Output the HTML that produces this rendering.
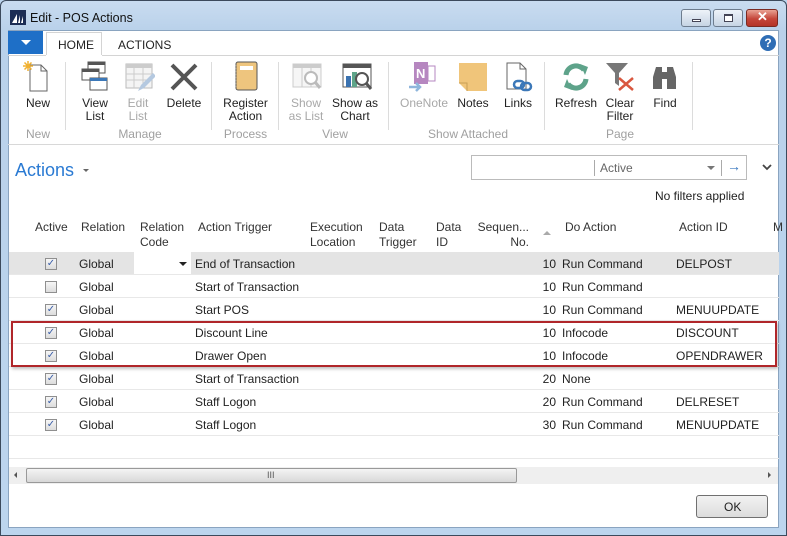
<!DOCTYPE html>
<html><head><meta charset="utf-8">
<style>
*{margin:0;padding:0;box-sizing:border-box}
body{width:787px;height:536px;overflow:hidden;position:relative;font-family:"Liberation Sans",sans-serif;font-size:12px;color:#222;background:#bcd5ee}
.a{position:absolute;white-space:nowrap}
.frame{position:absolute;left:0;top:0;width:787px;height:536px;border:1px solid #3c4a5c;border-radius:6px 6px 0 0;background:linear-gradient(#c9dcf0,#b9d1ea 30px,#bcd5ee)}
.content{position:absolute;left:8px;top:30px;width:771px;height:498px;background:#fff;border:1px solid #8aa4c0}
.lbl{position:absolute;text-align:center;font-size:12px;line-height:13px;color:#222}
.dis{color:#a8a8a8}
.grp{position:absolute;top:127px;font-size:12px;color:#a0a0a0;text-align:center}
.sep{position:absolute;top:62px;width:1px;height:68px;background:#dcdcdc}
.hd{position:absolute;top:220px;font-size:12px;line-height:15px;color:#333}
.row{position:absolute;left:9px;width:770px;height:23px;border-bottom:1px solid #e8e8e8}
.cb{position:absolute;left:45px;top:6px;width:12px;height:12px;border:1px solid #8f8f8f;background:linear-gradient(#f4f4f4,#ddd);font-size:10px;line-height:10px;text-align:center;color:#3b5fa8}
.t{position:absolute;top:4px;font-size:12px;color:#222}
.btn{position:absolute;width:24px;height:18px;top:9px;border:1px solid #6d7c8e;border-radius:3px;background:linear-gradient(#eef3f9,#c6d4e4)}
</style></head><body>
<div class="frame"></div>
<!-- title -->
<svg class="a" style="left:10px;top:10px" width="16" height="15"><rect width="16" height="15" fill="#1b2d55"/><path d="M2 13 L7 4 L7 13 Z M8 13 L10 5 L10 13 Z M11 13 L13 6 L13 13Z" fill="#fff"/></svg>
<div class="a" style="left:30px;top:11px;font-size:12.5px;color:#111">Edit - POS Actions</div>
<div class="btn" style="left:681px;width:30px"><div style="position:absolute;left:10px;top:9px;width:9px;height:3px;background:#fff;border:1px solid #445"></div></div>
<div class="btn" style="left:713px;width:30px"><div style="position:absolute;left:10px;top:4px;width:9px;height:8px;border:1px solid #445;border-top-width:2px;background:#fff"></div></div>
<div class="btn" style="left:746px;width:32px;border-color:#7a2a22;background:linear-gradient(#e9a293,#c5463a 55%,#b43428)"><div style="position:absolute;left:10px;top:-1px;color:#fff;font-weight:bold;font-size:13px">✕</div></div>
<div class="content"></div>
<!-- tabs -->
<div class="a" style="left:8px;top:31px;width:35px;height:23px;background:#1e6fc7"></div>
<div class="a" style="left:21px;top:40px;width:0;height:0;border-left:5px solid transparent;border-right:5px solid transparent;border-top:5px solid #fff"></div>
<div class="a" style="left:46px;top:32px;width:56px;height:24px;background:#fff;border:1px solid #d4d4d4;border-bottom:none"></div>
<div class="a" style="left:8px;top:55px;width:771px;height:1px;background:#d4d4d4"></div>
<div class="a" style="left:46px;top:55px;width:56px;height:2px;background:#fff"></div>
<div class="a" style="left:58px;top:38px;font-size:12px;color:#222">HOME</div>
<div class="a" style="left:118px;top:38px;font-size:12px;color:#222">ACTIONS</div>
<div class="a" style="left:760px;top:35px;width:16px;height:16px;border-radius:50%;background:#2e6db5;color:#fff;font-weight:bold;font-size:12px;text-align:center;line-height:16px">?</div>
<!-- ribbon icons -->
<svg class="a" style="left:22px;top:61px" width="30" height="32"><path d="M8 4 H19 L25 10 V30 H8 Z" fill="#fff" stroke="#666"/><path d="M19 4 V10 H25" fill="none" stroke="#666"/><g stroke="#f0b030" stroke-width="1.5"><path d="M6 0 V10 M1 5 H11 M2.5 1.5 L9.5 8.5 M9.5 1.5 L2.5 8.5"/></g></svg>
<div class="lbl" style="left:18px;top:97px;width:40px">New</div>
<div class="grp" style="left:18px;width:40px">New</div>
<div class="sep" style="left:65px"></div>
<svg class="a" style="left:80px;top:61px" width="30" height="32"><rect x="8" y="1" width="17" height="11" fill="#fff" stroke="#555"/><rect x="8" y="1" width="17" height="3" fill="#555"/><rect x="2" y="8" width="17" height="11" fill="#fff" stroke="#555"/><rect x="2" y="8" width="17" height="3" fill="#555"/><rect x="10" y="17" width="17" height="12" fill="#fff" stroke="#555"/><rect x="10" y="17" width="17" height="3" fill="#3c78b8"/></svg>
<div class="lbl" style="left:75px;top:97px;width:40px">View<br>List</div>
<svg class="a" style="left:125px;top:61px" width="30" height="32"><rect x="1" y="3" width="26" height="24" fill="#f4f4f4" stroke="#bbb"/><rect x="1" y="3" width="26" height="4" fill="#ccc"/><path d="M1 13 H27 M1 19 H27 M9 7 V27 M18 7 V27" stroke="#ccc"/><path d="M13 30 L16 24 L28 12 L31 15 L19 27 Z" fill="#b5c9e0"/></svg>
<div class="lbl dis" style="left:118px;top:97px;width:40px">Edit<br>List</div>
<svg class="a" style="left:169px;top:63px" width="30" height="28"><path d="M3 2 L27 26 M27 2 L3 26" stroke="#555" stroke-width="4"/></svg>
<div class="lbl" style="left:164px;top:97px;width:40px">Delete</div>
<div class="grp" style="left:95px;width:90px">Manage</div>
<div class="sep" style="left:211px"></div>
<svg class="a" style="left:232px;top:61px" width="28" height="32"><rect x="4" y="1" width="21" height="28" rx="2" fill="#eec57e" stroke="#555"/><rect x="8" y="5" width="13" height="4" fill="#fff"/><path d="M4 4 V27" stroke="#777" stroke-dasharray="1 2"/></svg>
<div class="lbl" style="left:218px;top:97px;width:55px">Register<br>Action</div>
<div class="grp" style="left:218px;width:55px">Process</div>
<div class="sep" style="left:278px"></div>
<svg class="a" style="left:292px;top:63px" width="32" height="30"><rect x="1" y="1" width="28" height="23" fill="#f6f6f6" stroke="#ccc"/><rect x="1" y="1" width="28" height="4" fill="#ccc"/><path d="M10 5 V24 M19 5 V24" stroke="#ccc"/><circle cx="19" cy="15" r="6" fill="#fff" stroke="#bbb" stroke-width="2"/><path d="M23 19 L28 25" stroke="#bbb" stroke-width="3"/></svg>
<div class="lbl dis" style="left:284px;top:97px;width:44px">Show<br>as List</div>
<svg class="a" style="left:342px;top:63px" width="32" height="30"><rect x="1" y="1" width="28" height="23" fill="#fff" stroke="#555"/><rect x="1" y="1" width="28" height="4" fill="#555"/><rect x="4" y="13" width="5" height="11" fill="#3a72b0"/><rect x="10" y="9" width="5" height="15" fill="#5fa58a"/><circle cx="20" cy="16" r="6" fill="#fff" stroke="#555" stroke-width="2"/><path d="M24 20 L29 26" stroke="#555" stroke-width="3"/></svg>
<div class="lbl" style="left:330px;top:97px;width:50px">Show as<br>Chart</div>
<div class="grp" style="left:310px;width:50px">View</div>
<div class="sep" style="left:388px"></div>
<svg class="a" style="left:408px;top:61px" width="30" height="32"><rect x="6" y="1" width="14" height="22" fill="#b687c0"/><text x="8" y="17" font-family="Liberation Sans" font-weight="bold" font-size="13" fill="#fff">N</text><rect x="20" y="5" width="7" height="15" fill="#fff" stroke="#b687c0"/><path d="M1 26 H12 M8 22 L12 26 L8 30" stroke="#8fb6dc" stroke-width="2.5" fill="none"/></svg>
<div class="lbl dis" style="left:396px;top:97px;width:56px">OneNote</div>
<svg class="a" style="left:458px;top:62px" width="30" height="30"><path d="M1 1 H29 V29 H9 L1 21 Z" fill="#f0c57a"/><path d="M1 21 H9 V29" fill="none" stroke="#c9a055"/></svg>
<div class="lbl" style="left:453px;top:97px;width:40px">Notes</div>
<svg class="a" style="left:505px;top:62px" width="28" height="32"><path d="M2 1 H15 L21 7 V27 H2 Z" fill="#fff" stroke="#666"/><path d="M15 1 V7 H21" fill="none" stroke="#666"/><rect x="9" y="19" width="10" height="7" rx="3.5" fill="none" stroke="#3c78b8" stroke-width="2.5"/><rect x="16" y="21" width="10" height="7" rx="3.5" fill="none" stroke="#3c78b8" stroke-width="2.5"/></svg>
<div class="lbl" style="left:498px;top:97px;width:40px">Links</div>
<div class="grp" style="left:408px;width:120px">Show Attached</div>
<div class="sep" style="left:544px"></div>
<svg class="a" style="left:561px;top:62px" width="30" height="30"><path d="M5 13 A10 10 0 0 1 23 8" fill="none" stroke="#5ea38a" stroke-width="5"/><path d="M19 2 L27 5 L24 13 Z" fill="#5ea38a"/><path d="M25 17 A10 10 0 0 1 7 22" fill="none" stroke="#5ea38a" stroke-width="5"/><path d="M11 28 L3 25 L6 17 Z" fill="#5ea38a"/></svg>
<div class="lbl" style="left:553px;top:97px;width:46px">Refresh</div>
<svg class="a" style="left:605px;top:62px" width="32" height="32"><path d="M1 1 H23 L14 11 V24 L10 21 V11 Z" fill="#777"/><path d="M14 16 L28 28 M28 16 L14 28" stroke="#d9573f" stroke-width="2.5"/></svg>
<div class="lbl" style="left:600px;top:97px;width:40px">Clear<br>Filter</div>
<svg class="a" style="left:651px;top:63px" width="28" height="28"><path d="M2 26 V14 L5 4 H11 V26 Z M16 26 V4 H22 L25 14 V26 Z" fill="#666"/><rect x="10" y="9" width="7" height="7" fill="#666"/></svg>
<div class="lbl" style="left:645px;top:97px;width:40px">Find</div>
<div class="grp" style="left:600px;width:40px">Page</div>
<div class="sep" style="left:692px"></div>
<div class="a" style="left:8px;top:144px;width:771px;height:1px;background:#d8d8d8"></div>
<!-- page title -->
<div class="a" style="left:15px;top:160px;font-size:18px;color:#2a7ad3">Actions</div>
<div class="a" style="left:83px;top:169px;border-left:3px solid transparent;border-right:3px solid transparent;border-top:3px solid #666"></div>
<div class="a" style="left:471px;top:155px;width:276px;height:25px;border:1px solid #bbb;background:#fff"></div>
<div class="a" style="left:594px;top:160px;width:1px;height:16px;background:#aaa"></div>
<div class="a" style="left:600px;top:161px;color:#666;font-size:12px">Active</div>
<div class="a" style="left:707px;top:166px;border-left:4px solid transparent;border-right:4px solid transparent;border-top:4px solid #777"></div>
<div class="a" style="left:721px;top:160px;width:1px;height:16px;background:#aaa"></div>
<div class="a" style="left:727px;top:158px;color:#3a78c0;font-size:14px;font-weight:bold">→</div>
<svg class="a" style="left:762px;top:164px" width="10" height="7"><path d="M1 1 L5 5 L9 1" stroke="#444" stroke-width="1.8" fill="none"/></svg>
<div class="a" style="left:655px;top:189px;font-size:12px;color:#222">No filters applied</div>
<!-- headers -->
<div class="hd" style="left:35px">Active</div>
<div class="hd" style="left:81px">Relation</div>
<div class="hd" style="left:140px">Relation<br>Code</div>
<div class="hd" style="left:198px">Action Trigger</div>
<div class="hd" style="left:310px">Execution<br>Location</div>
<div class="hd" style="left:379px">Data<br>Trigger</div>
<div class="hd" style="left:436px">Data<br>ID</div>
<div class="hd" style="left:476px;width:53px;text-align:right">Sequen...<br>No.</div>
<div class="a" style="left:543px;top:231px;border-left:4px solid transparent;border-right:4px solid transparent;border-bottom:4px solid #aaa"></div>
<div class="hd" style="left:565px">Do Action</div>
<div class="hd" style="left:679px">Action ID</div>
<div class="hd" style="left:773px">M</div>
<!-- rows -->
<div class="row" style="top:252px;background:#e4e4e4"><div style="position:absolute;left:125px;top:0;width:57px;height:22px;background:#fff"></div><div style="position:absolute;left:170px;top:10px;border-left:4px solid transparent;border-right:4px solid transparent;border-top:4px solid #222"></div></div>
<div class="row" style="top:275px"></div>
<div class="row" style="top:298px"></div>
<div class="row" style="top:321px"></div>
<div class="row" style="top:344px"></div>
<div class="row" style="top:367px"></div>
<div class="row" style="top:390px"></div>
<div class="row" style="top:413px"></div>
<div class="row" style="top:436px"></div>
<div id="rows"></div>
<script>
var d=[[1,"End of Transaction","10","Run Command","DELPOST"],[0,"Start of Transaction","10","Run Command",""],[1,"Start POS","10","Run Command","MENUUPDATE"],[1,"Discount Line","10","Infocode","DISCOUNT"],[1,"Drawer Open","10","Infocode","OPENDRAWER"],[1,"Start of Transaction","20","None",""],[1,"Staff Logon","20","Run Command","DELRESET"],[1,"Staff Logon","30","Run Command","MENUUPDATE"]];
var h="";d.forEach(function(r,i){var y=252+i*23;
h+='<div class="a" style="left:45px;top:'+(y+6)+'px;width:12px;height:12px;border:1px solid #8f8f8f;background:linear-gradient(#f6f6f6,#dcdcdc);font-size:10px;line-height:10px;text-align:center;color:#3b5fa8">'+(r[0]?'✓':'')+'</div>';
h+='<div class="a" style="left:79px;top:'+(y+5)+'px">Global</div>';
h+='<div class="a" style="left:195px;top:'+(y+5)+'px">'+r[1]+'</div>';
h+='<div class="a" style="left:490px;width:66px;text-align:right;top:'+(y+5)+'px">'+r[2]+'</div>';
h+='<div class="a" style="left:562px;top:'+(y+5)+'px">'+r[3]+'</div>';
h+='<div class="a" style="left:676px;top:'+(y+5)+'px">'+r[4]+'</div>';});
document.getElementById("rows").innerHTML=h;
</script>
<div class="a" style="left:11px;top:321px;width:766px;height:46px;border:2px solid #b0262a;box-shadow:1px 2px 3px rgba(0,0,0,.25)"></div>
<!-- scrollbar -->
<div class="a" style="left:9px;top:467px;width:769px;height:17px;background:#efefef"></div>
<div class="a" style="left:14px;top:472px;border-top:3px solid transparent;border-bottom:3px solid transparent;border-right:3px solid #555"></div>
<div class="a" style="left:26px;top:468px;width:491px;height:15px;border:1px solid #999;border-radius:2px;background:linear-gradient(#f4f4f4,#d8d8d8)"></div>
<div class="a" style="left:267px;top:470px;font-size:9px;color:#555">III</div>
<div class="a" style="left:768px;top:472px;border-top:3px solid transparent;border-bottom:3px solid transparent;border-left:3px solid #555"></div>
<div class="a" style="left:696px;top:495px;width:72px;height:23px;border:1px solid #707070;border-radius:3px;background:linear-gradient(#f2f2f2,#dcdcdc)"></div>
<div class="a" style="left:724px;top:500px;font-size:12px">OK</div>
</body></html>
